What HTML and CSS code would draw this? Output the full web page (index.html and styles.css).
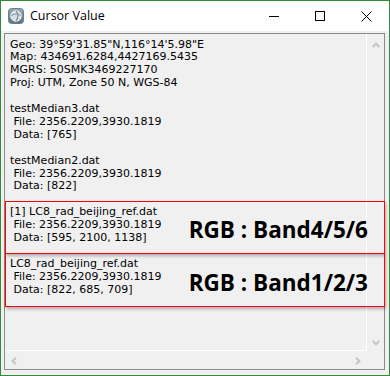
FILE: index.html
```html
<!DOCTYPE html>
<html>
<head>
<meta charset="utf-8">
<link rel="stylesheet" href="styles.css">
</head>
<body>
<div class="window">
  <div class="titlebar">
    <svg class="appicon" width="16" height="16" viewBox="0 0 16 16">
      <defs>
        <linearGradient id="ig" x1="0" y1="0" x2="0" y2="1">
          <stop offset="0" stop-color="#9aa9b6"/>
          <stop offset="1" stop-color="#5f7384"/>
        </linearGradient>
      </defs>
      <rect x="0.5" y="0.5" width="15" height="15" rx="3" fill="url(#ig)" stroke="#6b7d8c"/>
      <circle cx="8" cy="8" r="5.2" fill="#d9dee3" stroke="#f4f6f8" stroke-width="1"/>
      <path d="M3.5 7.5 C6 5.5 10 5.5 12.5 7.5" fill="none" stroke="#7f8e9b" stroke-width="1.2"/>
      <path d="M8 3 C10.5 5 10.5 10.5 8 13" fill="none" stroke="#7f8e9b" stroke-width="1.2"/>
    </svg>
    <span class="title">Cursor Value</span>
    <div class="controls">
      <div class="ctl"><svg width="10" height="10" viewBox="0 0 10 10"><path d="M0 5.5H10" stroke="#000" stroke-width="1"/></svg></div>
      <div class="ctl"><svg width="10" height="10" viewBox="0 0 10 10"><rect x="0.5" y="0.5" width="9" height="9" fill="none" stroke="#000" stroke-width="1"/></svg></div>
      <div class="ctl"><svg width="11" height="11" viewBox="0 0 11 11"><path d="M0.5 0.5L10.5 10.5M10.5 0.5L0.5 10.5" stroke="#000" stroke-width="1"/></svg></div>
    </div>
  </div>
  <div class="client">
    <div class="listbox">
      <pre class="content">Geo: 39°59'31.85"N,116°14'5.98"E
Map: 434691.6284,4427169.5435
MGRS: 50SMK3469227170
Proj: UTM, Zone 50 N, WGS-84

testMedian3.dat
 File: 2356.2209,3930.1819
 Data: [765]

testMedian2.dat
 File: 2356.2209,3930.1819
 Data: [822]

[1] LC8_rad_beijing_ref.dat
 File: 2356.2209,3930.1819
 Data: [595, 2100, 1138]

LC8_rad_beijing_ref.dat
 File: 2356.2209,3930.1819
 Data: [822, 685, 709]</pre>
      <div class="vscroll">
        <svg width="8" height="6" viewBox="0 0 8 6"><polyline points="0.8,5 4,1.6 7.2,5" fill="none" stroke="#c4c4c4" stroke-width="2"/></svg>
        <svg width="8" height="6" viewBox="0 0 8 6"><polyline points="0.8,1 4,4.4 7.2,1" fill="none" stroke="#c4c4c4" stroke-width="2"/></svg>
      </div>
      <div class="hscroll">
        <svg width="6" height="8" viewBox="0 0 6 8"><polyline points="5,0.8 1.6,4 5,7.2" fill="none" stroke="#c4c4c4" stroke-width="2"/></svg>
        <svg width="6" height="8" viewBox="0 0 6 8"><polyline points="1,0.8 4.4,4 1,7.2" fill="none" stroke="#c4c4c4" stroke-width="2"/></svg>
      </div>
      <div class="corner"></div>
      <div class="annots">
        <div class="annot"><span class="label">RGB : Band4/5/6</span></div>
        <div class="annot annot-next"><span class="label">RGB : Band1/2/3</span></div>
      </div>
    </div>
  </div>
</div>
</body>
</html>
```
FILE: styles.css
```css
* { box-sizing: border-box; }
html, body { margin: 0; padding: 0; background: #fff; }

.window {
  width: 390px;
  height: 376px;
  border: 1px solid #2f8c34;
  background: #f0f0f0;
  display: flex;
  flex-direction: column;
}

.titlebar {
  height: 30px;
  background: #fff;
  display: flex;
  align-items: center;
  flex: none;
}
.appicon { margin-left: 7px; margin-right: 6px; flex: none; }
.title {
  font-family: "Open Sans", "Noto Sans", sans-serif;
  font-size: 12.5px;
  color: #000;
  margin-top: -1px;
}
.controls { margin-left: auto; display: flex; height: 30px; }
.ctl {
  width: 46px;
  height: 30px;
  display: flex;
  align-items: center;
  justify-content: center;
}
.ctl svg { display: block; }

.client {
  flex: 1;
  padding: 2px 4px 5px 3px;
  display: flex;
}
.listbox {
  flex: 1;
  position: relative;
  border: 1px solid #8a8a8a;
  display: grid;
  grid-template-columns: 1fr 17px;
  grid-template-rows: 1fr 18px;
}
.content {
  margin: 0;
  grid-column: 1;
  grid-row: 1;
  border-right: 1px solid #fff;
  border-bottom: 1px solid #fff;
  padding: 4.5px 0 0 5px;
  font-family: "DejaVu Sans", Verdana, sans-serif;
  font-size: 11px;
  line-height: 12.9px;
  color: #000;
  white-space: pre;
  overflow: hidden;
}
.vscroll {
  grid-column: 2;
  grid-row: 1;
  display: flex;
  flex-direction: column;
  align-items: center;
  justify-content: space-between;
  padding: 8px 0 5px 1px;
}
.hscroll {
  grid-column: 1;
  grid-row: 2;
  display: flex;
  align-items: center;
  justify-content: space-between;
  padding: 1px 6px 0 6px;
}
.vscroll svg, .hscroll svg { display: block; }
.corner { grid-column: 2; grid-row: 2; }

.annots {
  position: absolute;
  left: 0;
  top: 167px;
  width: 380px;
  display: flex;
  flex-direction: column;
}
.annot {
  height: 53px;
  border: 1px solid #ff0000;
  box-shadow: 1px 2px 3px rgba(0, 0, 0, 0.28);
  display: flex;
  align-items: center;
  justify-content: flex-end;
  padding-right: 16px;
}
.annot-next { margin-top: -1px; height: 54px; }
.label {
  font-family: "Open Sans", "Noto Sans", sans-serif;
  font-weight: 700;
  font-size: 22.5px;
  color: #000;
  margin-top: 4px;
}
```
